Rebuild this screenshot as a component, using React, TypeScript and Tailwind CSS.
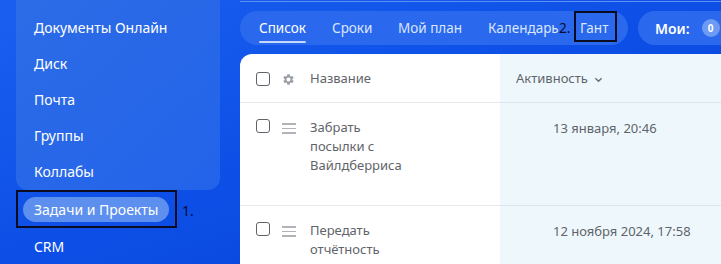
import React from "react";

const font = { fontFamily: '"Noto Sans", "Open Sans", Arial, sans-serif' };

function Checkbox() {
  return <div className="w-[14px] h-[14px] rounded-[3px] border-[1.5px] border-[#5f6368] bg-white shrink-0" />;
}

function Gear() {
  return (
    <svg width="13" height="13" viewBox="0 0 24 24" className="shrink-0">
      <path
        fill="#9aa0a6"
        d="M19.14 12.94c.04-.31.06-.62.06-.94 0-.32-.02-.64-.07-.94l2.03-1.58a.49.49 0 0 0 .12-.61l-1.92-3.32a.488.488 0 0 0-.59-.22l-2.39.96c-.5-.38-1.03-.7-1.62-.94l-.36-2.54a.484.484 0 0 0-.48-.41h-3.84c-.24 0-.43.17-.47.41l-.36 2.54c-.59.24-1.13.57-1.62.94l-2.39-.96c-.22-.08-.47 0-.59.22L2.74 8.87c-.12.21-.08.47.12.61l2.03 1.58c-.05.3-.09.63-.09.94s.02.64.07.94l-2.03 1.58a.49.49 0 0 0-.12.61l1.92 3.32c.12.22.37.29.59.22l2.39-.96c.5.38 1.03.7 1.62.94l.36 2.54c.05.24.24.41.48.41h3.84c.24 0 .44-.17.47-.41l.36-2.54c.59-.24 1.13-.56 1.62-.94l2.39.96c.22.08.47 0 .59-.22l1.92-3.32c.12-.22.07-.47-.12-.61l-2.01-1.58zM12 15.6c-1.98 0-3.6-1.62-3.6-3.6s1.62-3.6 3.6-3.6 3.6 1.62 3.6 3.6-1.62 3.6-3.6 3.6z"
      />
    </svg>
  );
}

function Burger() {
  return (
    <div className="flex flex-col gap-[3px] w-[14px] shrink-0 mt-[4px]">
      <div className="h-[1.5px] bg-[#b0b4b8]" />
      <div className="h-[1.5px] bg-[#b0b4b8]" />
      <div className="h-[1.5px] bg-[#b0b4b8]" />
    </div>
  );
}

export default function App() {
  const menu = ["Документы Онлайн", "Диск", "Почта", "Группы", "Коллабы"];
  return (
    <div
      className="w-[721px] h-[264px] overflow-hidden flex bg-gradient-to-br from-[#1a5ff0] via-[#0d4fe6] to-[#0840d6]"
      style={font}
    >
      {/* Sidebar */}
      <div className="w-[240px] shrink-0 flex flex-col">
        <div className="ml-[16px] w-[204px] h-[190px] rounded-b-[12px] bg-gradient-to-br from-[#2c6ce6] to-[#2363ea] pl-[18px] pt-[9px] flex flex-col">
          {menu.map((m) => (
            <div key={m} className="h-[36px] flex items-center text-white text-[14px]">
              {m}
            </div>
          ))}
        </div>
        <div className="relative h-[37px] mt-[1px] flex items-center">
          <div className="ml-[23px] h-[25px] px-[11px] rounded-full bg-[#5c8fee] text-white text-[14px] flex items-center">
            Задачи и Проекты
          </div>
          <div className="absolute left-[16px] top-[-1px] w-[161px] h-[38px] border-2 border-[#0b0b22]" />
          <span className="absolute left-[182px] top-[9px] text-[#0b0b30] text-[14px]">1.</span>
        </div>
        <div className="pl-[34px] h-[36px] flex items-center text-white text-[14px]">CRM</div>
      </div>

      {/* Main */}
      <div className="flex-1 flex flex-col">
        <div className="h-[2px] border-b border-[#5d8ff5]" />
        <div className="flex items-center gap-[10px] mt-[9px] h-[34px]">
          <div className="w-[388px] h-[34px] rounded-full bg-[#2a69ee] flex items-center pl-[19px] text-[13.5px] text-[#dbe6ff] relative">
            <div className="w-[73px] shrink-0">
              <div className="relative text-white inline-block">
                Список
                <div className="absolute left-0 right-0 bottom-[-5px] h-[2px] bg-[#c7d8ff] rounded" />
              </div>
            </div>
            <span className="w-[66px] shrink-0">Сроки</span>
            <span className="w-[90px] shrink-0">Мой план</span>
            <span className="w-[71px] shrink-0 whitespace-nowrap">Календарь</span>
            <span className="w-[21px] shrink-0 text-[#0b0b30]">2.</span>
            <span>Гант</span>
            <div className="absolute left-[334px] top-0 w-[43px] h-[31px] border-2 border-[#0b0b22]" />
          </div>
          <div className="flex-1 h-[34px] rounded-l-full bg-[#2a69ee] flex items-center pl-[17px] gap-[12px]">
            <span className="text-white font-semibold text-[14px]">Мои:</span>
            <span className="w-[18px] h-[18px] rounded-full bg-[#6d9af2] text-white text-[10px] font-bold flex items-center justify-center">0</span>
          </div>
        </div>

        {/* Table card */}
        <div className="mt-[9px] flex-1 bg-white rounded-tl-[12px] overflow-hidden flex text-[13px] text-[#5f646a]">
          <div className="w-[260px] shrink-0 flex flex-col">
            <div className="h-[49px] border-b border-[#e6e9ec] flex items-center pl-[16px] pt-[2px] gap-[12px]">
              <Checkbox />
              <Gear />
              <span className="ml-[3px]">Название</span>
            </div>
            <div className="h-[103px] border-b border-[#e6e9ec] flex items-start pl-[16px] pt-[16px] gap-[12px]">
              <Checkbox />
              <Burger />
              <div className="ml-[2px] mt-[-1px] leading-[19px]">
                Забрать
                <br />
                посылки с
                <br />
                Вайлдберриса
              </div>
            </div>
            <div className="flex items-start pl-[16px] pt-[16px] gap-[12px]">
              <Checkbox />
              <Burger />
              <div className="ml-[2px] mt-[-1px] leading-[19px]">
                Передать
                <br />
                отчётность
              </div>
            </div>
          </div>
          <div className="flex-1 bg-[#eef8fc] flex flex-col">
            <div className="h-[49px] border-b border-[#dde6ea] flex items-center pl-[16px] pt-[2px] gap-[6px]">
              <span>Активность</span>
              <svg width="9" height="9" viewBox="0 0 10 10">
                <path d="M1.5 3.5 L5 7 L8.5 3.5" stroke="#6b7075" strokeWidth="1.6" fill="none" />
              </svg>
            </div>
            <div className="h-[103px] border-b border-[#dde6ea] pl-[53px] pt-[16px]">
              <div className="leading-[19px]">13 января, 20:46</div>
            </div>
            <div className="pl-[53px] pt-[16px]">
              <div className="leading-[19px]">12 ноября 2024, 17:58</div>
            </div>
          </div>
        </div>
      </div>
    </div>
  );
}
